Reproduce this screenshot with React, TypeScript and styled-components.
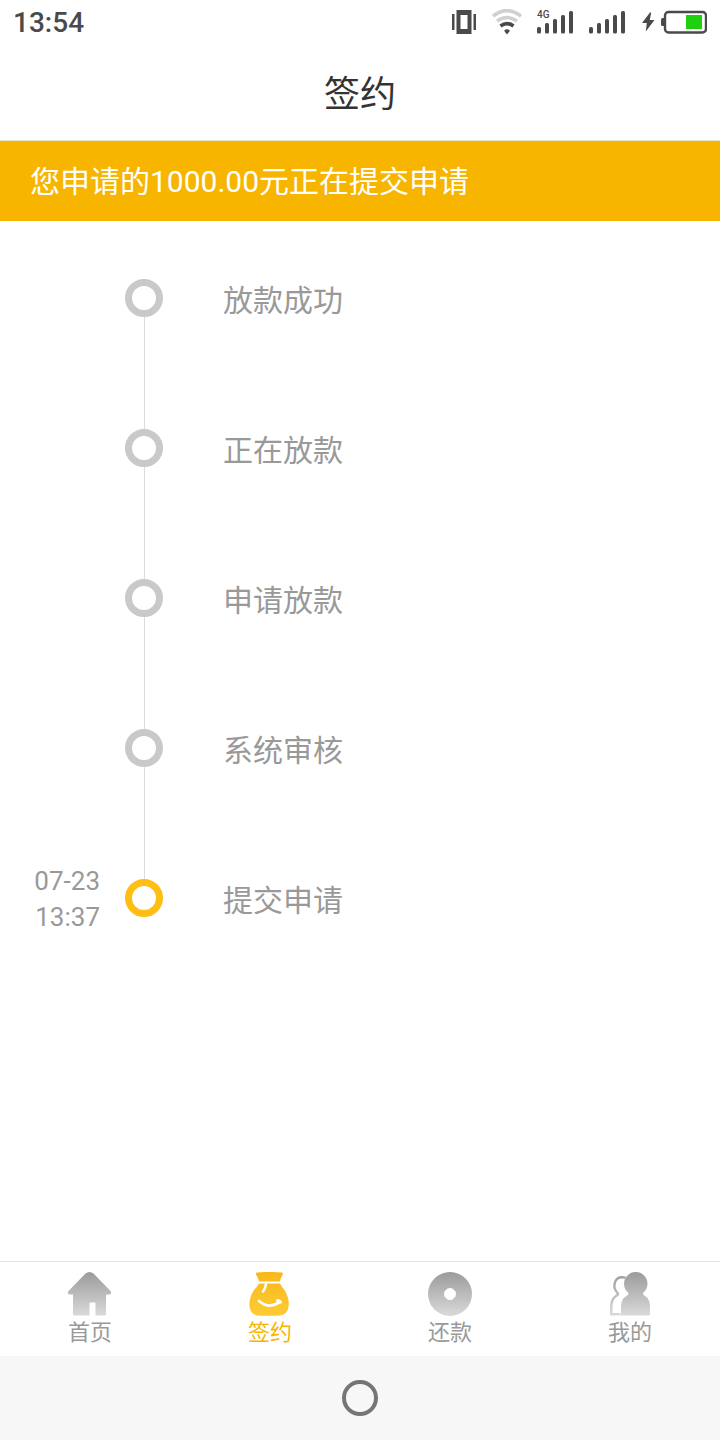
import React from "react";
import styled, { createGlobalStyle } from "styled-components";

const GlobalStyle = createGlobalStyle`
  *, *::before, *::after { box-sizing: border-box; }
  body {
    margin: 0;
    background: #fff;
    font-family: Roboto, "Noto Sans CJK SC", sans-serif;
  }
`;

const Screen = styled.div`
  display: flex;
  flex-direction: column;
  min-height: 100vh;
`;

const StatusBar = styled.div`
  display: flex;
  align-items: center;
  justify-content: space-between;
  height: 44px;
  padding: 0 13px;
  color: #4a4a4a;
`;

const Clock = styled.time`
  padding-top: 2px;
  font-size: 28px;
  font-weight: 500;
  line-height: 42px;
`;

const StatusIcons = styled.div`
  display: flex;
  align-items: center;

  svg { display: block; }
`;

const Gap = styled.span<{ $size: number }>`
  width: ${(p) => p.$size}px;
`;

const Header = styled.header`
  display: flex;
  align-items: center;
  justify-content: center;
  height: 97px;
  padding-top: 6px;
  border-bottom: 1px solid #ece3cc;
`;

const Title = styled.h1`
  margin: 0;
  font-size: 36px;
  font-weight: 400;
  line-height: 48px;
  color: #333;
`;

const Banner = styled.p`
  margin: 0;
  padding: 2px 30px 0;
  background: #f7b500;
  color: #fff;
  font-size: 30px;
  line-height: 78px;
`;

const Main = styled.main`
  flex: 1;
`;

const Steps = styled.ol`
  margin: 0;
  padding: 40px 0 0;
  list-style: none;
`;

const Step = styled.li`
  position: relative;
  display: grid;
  grid-template-columns: 100px 38px 1fr;
  column-gap: 25px;
  align-items: center;
  height: 74px;
  margin-bottom: 76px;

  &:not(:last-child)::after {
    content: "";
    position: absolute;
    left: 144px;
    top: 56px;
    height: 112px;
    width: 1px;
    background: #dcdcdc;
  }
`;

const StepTime = styled.time`
  padding-top: 2px;
  font-size: 26px;
  line-height: 36px;
  text-align: right;
  color: #999;

  span { display: block; }
`;

const Ring = styled.span<{ $active: boolean }>`
  width: 38px;
  height: 38px;
  border: 7px solid ${(p) => (p.$active ? "#ffbe14" : "#c9c9c9")};
  border-radius: 50%;
`;

const StepLabel = styled.span`
  padding: 6px 0 0 35px;
  font-size: 30px;
  line-height: 44px;
  color: #999;
`;

const TabBar = styled.nav`
  display: grid;
  grid-template-columns: repeat(4, 1fr);
  height: 95px;
  border-top: 1px solid #e2e2e2;
`;

const Tab = styled.a<{ $active: boolean }>`
  display: flex;
  flex-direction: column;
  align-items: center;
  padding-top: 10px;
  font-size: 22px;
  line-height: 34px;
  text-decoration: none;
  color: ${(p) => (p.$active ? "#f7b500" : "#999")};
`;

const SystemNav = styled.div`
  display: flex;
  align-items: center;
  justify-content: center;
  height: 84px;
  background: #f7f7f7;
`;

const HomeButton = styled.button`
  width: 36px;
  height: 36px;
  padding: 0;
  border: 4px solid #757575;
  border-radius: 50%;
  background: transparent;
`;

const Vibrate = () => (
  <svg width="24" height="24" viewBox="0 0 24 24" fill="#4a4a4a" aria-hidden="true">
    <path d="M0 4h2.5v16H0zM21.5 4H24v16h-2.5z" />
    <path fillRule="evenodd" d="M4.500 0h15v24h-15zM8.500 5v14h7V5z" />
  </svg>
);

const Wifi = () => (
  <svg width="30" height="26" viewBox="0 0 30 26" fill="none" aria-hidden="true">
    <path d="M1 7.200Q15-4 29 7.200" stroke="#d0d0d0" strokeWidth="3.600" />
    <path d="M5 12.200Q15 4.600 25 12.200" stroke="#d0d0d0" strokeWidth="3.400" />
    <path d="M8.500 17Q15 12.200 21.500 17" stroke="#4a4a4a" strokeWidth="3.600" />
    <path d="M12.400 21.200q2.600-2 5.200 0c.2 1.600-1.400 2.600-2.600 4.200-1.200-1.600-2.800-2.600-2.600-4.200z" fill="#4a4a4a" />
  </svg>
);

const Signal = ({ network }: { network?: string }) => (
  <svg width="37" height="24" viewBox="0 0 37 24" fill="#4a4a4a" aria-hidden="true">
    {[17, 13, 9, 5, 1].map((top, i) => (
      <rect key={top} x={i * 8} y={top} width="4" height={23.5 - top} rx="1.500" />
    ))}
    {network && (
      <text x="0" y="8" fontSize="10" fontWeight="500">
        {network}
      </text>
    )}
  </svg>
);

const Bolt = () => (
  <svg width="13" height="20" viewBox="0 0 13 20" fill="#4a4a4a" aria-hidden="true">
    <path d="M8 .5L0 11h4.800L3.800 19.500 12.500 8H7.800L9.200.5z" />
  </svg>
);

const Battery = () => (
  <svg width="46" height="24" viewBox="0 0 46 24" aria-hidden="true">
    <rect x="0" y="8" width="5" height="8" rx="1.500" fill="#4a4a4a" />
    <rect x="4" y="2" width="41" height="20.500" rx="3.500" fill="none" stroke="#4a4a4a" strokeWidth="2.400" />
    <rect x="25" y="5" width="16" height="14" fill="#1fd00f" />
  </svg>
);

const Fade = ({ id, from, to }: { id: string; from: string; to: string }) => (
  <defs>
    <linearGradient id={id} x1="0" y1="0" x2="0" y2="44" gradientUnits="userSpaceOnUse">
      <stop offset="0" stopColor={from} />
      <stop offset="1" stopColor={to} />
    </linearGradient>
  </defs>
);

const HomeIcon = () => (
  <svg width="44" height="44" viewBox="0 0 44 44" aria-hidden="true">
    <Fade id="home-fade" from="#9b9b9b" to="#dadada" />
    <path
      fill="url(#home-fade)"
      d="M17.500 1.500Q21.500-1.500 25.500 1.500L42.500 19Q44.500 22.500 41 22.500H38V42Q38 43.500 36.500 43.500H27.500V31Q27.500 30.500 27 30.500H22Q21.500 30.500 21.500 31V43.500H6.500Q5 43.500 5 42V22.500H2Q-1.200 22.500 .5 19z"
    />
  </svg>
);

const BagIcon = () => (
  <svg width="44" height="44" viewBox="0 0 44 44" fill="none" aria-hidden="true">
    <Fade id="bag-fade" from="#f9b81a" to="#fecb36" />
    <path
      fill="url(#bag-fade)"
      d="M9 .5Q21-.6 34 .5Q35.500 1 34.500 3Q32.500 6 32 9.500H11Q10 5.500 8 2.500Q7.500 1 9 .5zM11 11.500H32Q33.500 14.500 36.500 18Q41 25 40.800 33Q40 43.800 30 43.800H12.500Q2 43.800 1.300 33Q1.300 25 6 18Q9.500 14.500 11 11.500z"
    />
    <path d="M18 10.500Q18 15.500 15 19.500" stroke="#fff" strokeWidth="2.400" strokeLinecap="round" />
    <path d="M11 29Q21 37.500 31 30.500" stroke="#fff" strokeWidth="2.800" strokeLinecap="round" />
    <path d="M29 28.500Q31.500 27.500 33 30.500" stroke="#fff" strokeWidth="2.200" strokeLinecap="round" />
  </svg>
);

const CoinIcon = () => (
  <svg width="44" height="44" viewBox="0 0 44 44" aria-hidden="true">
    <Fade id="coin-fade" from="#9b9b9b" to="#dadada" />
    <circle cx="22" cy="22" r="22" fill="url(#coin-fade)" />
    <path d="M19.500 16.500Q22 15.500 24.500 16.500L27.500 19.500Q28.500 22 27.500 24.500L24.500 27.500Q22 28.500 19.500 27.500L16.500 24.500Q15.500 22 16.500 19.500z" fill="#fff" />
  </svg>
);

const PeopleIcon = () => (
  <svg width="44" height="44" viewBox="0 0 44 44" aria-hidden="true">
    <Fade id="people-fade" from="#9b9b9b" to="#dadada" />
    <path
      d="M18 6Q10.500 3.500 7.500 9Q4.500 15.500 9 20.500Q11.500 22.500 8 24Q3.300 27 3.300 35V42.300H14"
      fill="none"
      stroke="url(#people-fade)"
      strokeWidth="2.400"
    />
    <path
      d="M27.800 0A11.700 11.700 0 0 1 39.500 11.700Q39.500 17 35.500 20.500Q34 22 36.500 23.500Q42 27 42 34.500V42Q42 43.500 40.500 43.500H14.500Q13 43.500 13 42V34.500Q13 27 19 23.500Q21.500 22 20 20.500Q16 17 16 11.700A11.700 11.700 0 0 1 27.800 0z"
      fill="url(#people-fade)"
      stroke="#fff"
      strokeWidth="1"
      paintOrder="stroke"
    />
  </svg>
);

const steps = [
  { label: "放款成功" },
  { label: "正在放款" },
  { label: "申请放款" },
  { label: "系统审核" },
  { label: "提交申请", date: "07-23", time: "13:37", active: true },
];

const tabs = [
  { label: "首页", Icon: HomeIcon },
  { label: "签约", Icon: BagIcon, active: true },
  { label: "还款", Icon: CoinIcon },
  { label: "我的", Icon: PeopleIcon },
];

export default function App() {
  return (
    <Screen>
      <GlobalStyle />
      <StatusBar>
        <Clock>13:54</Clock>
        <StatusIcons>
          <Vibrate />
          <Gap $size={16} />
          <Wifi />
          <Gap $size={15} />
          <Signal network="4G" />
          <Gap $size={15} />
          <Signal />
          <Gap $size={16} />
          <Bolt />
          <Gap $size={6} />
          <Battery />
        </StatusIcons>
      </StatusBar>
      <Header>
        <Title>签约</Title>
      </Header>
      <Banner>您申请的1000.00元正在提交申请</Banner>
      <Main>
        <Steps>
          {steps.map((step) => (
            <Step key={step.label}>
              <StepTime>
                <span>{step.date}</span>
                <span>{step.time}</span>
              </StepTime>
              <Ring $active={!!step.active} />
              <StepLabel>{step.label}</StepLabel>
            </Step>
          ))}
        </Steps>
      </Main>
      <TabBar>
        {tabs.map(({ label, Icon, active }) => (
          <Tab key={label} href="#" $active={!!active} aria-current={active ? "page" : undefined}>
            <Icon />
            {label}
          </Tab>
        ))}
      </TabBar>
      <SystemNav>
        <HomeButton type="button" aria-label="主屏幕" />
      </SystemNav>
    </Screen>
  );
}
